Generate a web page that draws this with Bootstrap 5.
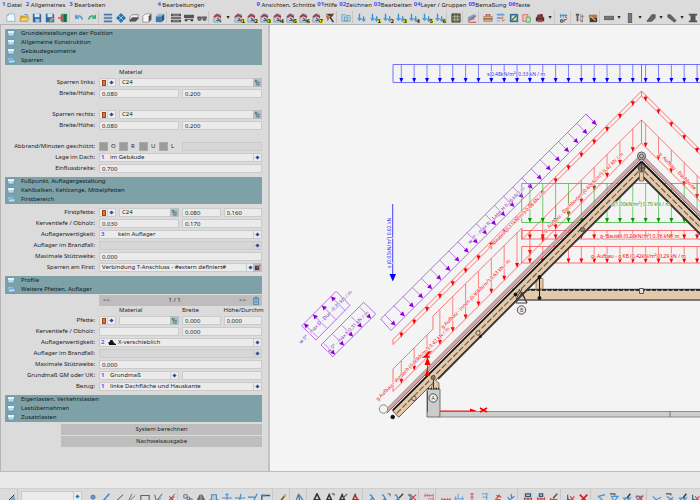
<!DOCTYPE html>
<html lang="de">
<head>
<meta charset="utf-8">
<meta name="viewport" content="width=device-width, initial-scale=1">
<title>Dachtragwerk</title>
<link href="https://cdn.jsdelivr.net/npm/bootstrap@5.3.0/dist/css/bootstrap.min.css" rel="stylesheet">
<style>
:root { --panel:#dbdbdb; --field:#ebebeb; --edge:#cbcbcb; --teal:#7da1a7; }
body { font:6px/9px "Noto Sans","DejaVu Sans",sans-serif; color:#222; background:var(--panel); }
button, input, select { font:inherit; color:inherit; }
.menu { height:11px; padding-left:2px; }
.menu a { color:#222; text-decoration:none; line-height:10px; white-space:nowrap; margin-right:2px; }
.menu .wide { margin-right:4px; }
.menu .group { margin-left:50px; }
.menu b { color:#4a4aff; position:relative; top:-1px; }
.tools { height:14px; padding-left:4px; border-bottom:1px solid #b4b4b4; }
.tool { flex:0 0 13px; height:13px; padding:0; border:0; background:none; position:relative; display:flex; align-items:center; justify-content:center; }
.tool svg { width:10px; height:10px; }
.tool i { position:absolute; right:0; bottom:0; font:bold 5px/5px "DejaVu Sans",sans-serif; background:#f2ee1c; color:#222; }
.drop { flex:0 0 8px; text-align:center; padding:0; border:0; background:none; line-height:9px; }
.rule { flex:0 0 3px; height:12px; border-left:1px solid #c6c6c6; }
.side { flex:0 0 270px; padding:4px 6px 0 4px; border-left:1px solid #b4b4b4; border-right:2px solid #c2c2c2; background:var(--panel); }
.side section { padding:3px 0; }
.side section.paged { padding-top:1px; }
.heads { background:var(--teal); }
.heads button { display:flex; align-items:center; width:100%; height:9px; border:0; padding:0 0 0 2px; background:none; text-align:left; gap:5px; color:#132024; }
.heads svg { width:9px; height:7px; }
.frow { display:grid; grid-template-columns:90px minmax(0,1fr); column-gap:4px; height:11px; align-items:center; }
.frow > label, .frow > .lab { text-align:right; white-space:nowrap; }
.parts { display:grid; column-gap:3px; align-items:center; min-width:0; }
.two { grid-template-columns:1fr 1fr; }
.mat { grid-template-columns:17px minmax(0,1fr); }
.mat4 { grid-template-columns:17px minmax(0,61fr) minmax(0,39fr) minmax(0,39fr); }
.box { height:9px; border:1px solid var(--edge); background:var(--field); min-width:0; width:100%; padding:0 2px; line-height:7px; border-radius:0; }
.off { background:#d7d7d7; }
.pick { display:flex; align-items:center; padding:0; }
.pick select, .pick input { appearance:none; border:0; background:none; flex:1 1 0; min-width:0; height:7px; line-height:7px; padding:0 2px; outline:0; }
.pick b { flex:0 0 8px; color:#5a5aff; line-height:7px; padding-left:1px; }
.dia { flex:0 0 8px; border-left:1px solid var(--edge); height:7px; display:flex; align-items:center; justify-content:center; }
.dia::before { content:""; width:3px; height:3px; background:#2f4c9c; transform:rotate(45deg); }
.sw { flex:0 0 7px; display:flex; justify-content:center; }
.sw::before { content:""; width:4px; height:6px; background:#ee7030; border:1px solid #9a451b; }
.tree { flex:0 0 9px; height:9px; margin:-1px; padding:0; border:0; background:#b9bfc0; display:flex; align-items:center; justify-content:center; }
.tree svg { width:7px; height:7px; }
.checks label { display:flex; align-items:center; width:20px; }
.checks input { appearance:none; width:9px; height:9px; background:#9b9b9b; border:1px solid #aaa; margin:0 3px 0 0; }
.pager { height:11px; margin-left:94px; background:#bdbdbd; display:grid; grid-template-columns:15px 1fr 15px 12px; text-align:center; align-items:center; }
.pager button { border:0; background:none; padding:0; line-height:9px; }
.pager svg { width:8px; height:9px; display:block; margin:auto; }
.caps { height:9px; }
.void { height:10px; }
.actions { display:grid; row-gap:1px; padding:2px 0 0 56px; }
.act { height:11px; border:0; padding:0; background:#bebebe; line-height:11px; }
.plan { background:#f4f4f4; min-width:0; }
.plan svg { width:100%; height:100%; display:block; }
.plan text { font-family:"Noto Sans","Liberation Sans",sans-serif; font-size:5px; paint-order:stroke; stroke:#f4f4f4; stroke-width:1px; }
.message { height:18px; background:#e9e9e9; border-top:1px solid #bbb; border-bottom:1px solid #cfcfcf; }
.foot { height:11px; padding-left:4px; }
.foot .tool { height:18px; }
.foot .rule { flex-basis:4px; }
.layerpick { flex:0 0 61px; height:15px; margin:2px 4px 0 0; }
.layerpick .dia { height:9px; align-self:flex-start; }
.layerpick .dia::before { background:#1c7cc4; }
</style>
<script src="https://cdn.jsdelivr.net/npm/bootstrap@5.3.0/dist/js/bootstrap.bundle.min.js"></script>
</head>
<body class="vh-100 d-flex flex-column overflow-hidden">
<svg class="d-none">
  <symbol id="shut" viewBox="0 0 9 7"><path d="M1 1h6v5H1z" fill="#b5d9ee" stroke="#5292bd" stroke-width=".7"/><path d="M1 1h6v2H1z" fill="#e5f4fc"/></symbol>
  <symbol id="open" viewBox="0 0 9 7"><path d="M1 1h5v1h1v4H1z" fill="#8cc0e0"/><path d="M1 6l1-3h7L7 6z" fill="#b8dcf0" stroke="#4a8bb8" stroke-width=".6"/></symbol>
  <symbol id="tree" viewBox="0 0 8 8"><path d="M1 1h3v2H1zM4 3h3v2H4zM4 6h3v1H4z" fill="#5f8f99"/><path d="M2 1v3h3M3 4v3h3" fill="none" stroke="#55757c" stroke-width=".8"/></symbol>
  <symbol id="bin" viewBox="0 0 8 9"><path d="M1.500 2.500h5v6h-5z" fill="#9fc9df" stroke="#4a82a5" stroke-width=".8"/><path d="M1 2h6M3 1h2M3.200 3.500v4M4.800 3.500v4" stroke="#4a82a5" stroke-width=".8"/></symbol>
</svg>

<nav class="menu d-flex flex-shrink-0" aria-label="Hauptmenü">
  <a href="#" class="wide"><b>1</b> Datei</a>
  <a href="#" class="wide"><b>2</b> Allgemeines</a>
  <a href="#"><b>3</b> Bearbeiten</a>
  <a href="#" class="group"><b>4</b> Bearbeitungen</a>
  <a href="#" class="group"><b>9</b> Ansichten, Schnitte</a>
  <a href="#"><b>01</b>Hilfe</a>
  <a href="#"><b>02</b>Zeichnen</a>
  <a href="#"><b>03</b>Bearbeiten</a>
  <a href="#"><b>04</b>Layer / Gruppen</a>
  <a href="#"><b>05</b>Bemaßung</a>
  <a href="#"><b>06</b>Texte</a>
</nav>
<div class="tools d-flex flex-shrink-0 overflow-hidden" id="topTools" role="toolbar" aria-label="Werkzeuge"></div>

<main class="d-flex flex-grow-1 overflow-hidden">
  <form class="side">
    <div class="heads">
      <button type="button"><svg><use href="#shut"/></svg>Grundeinstellungen der Position</button>
      <button type="button"><svg><use href="#shut"/></svg>Allgemeine Konstruktion</button>
      <button type="button"><svg><use href="#shut"/></svg>Gebäudegeometrie</button>
      <button type="button"><svg><use href="#open"/></svg>Sparren</button>
    </div>
    <section>
      <div class="frow caps"><span></span><span class="parts mat"><span></span><span>Material</span></span></div>
      <div class="frow"><label for="sl">Sparren links:</label><div class="parts mat"><button type="button" class="box pick" aria-label="Art"><span class="sw"></span><span class="dia"></span></button><div class="box pick"><input id="sl" value="C24"><button type="button" class="tree" aria-label="Auswahl"><svg><use href="#tree"/></svg></button></div></div></div>
      <div class="frow"><label for="bl">Breite/Höhe:</label><div class="parts two"><input class="box" id="bl" value="0.080"><input class="box" value="0.200" aria-label="Höhe links"></div></div>
      <div class="void"></div>
      <div class="frow"><label for="sr">Sparren rechts:</label><div class="parts mat"><button type="button" class="box pick" aria-label="Art"><span class="sw"></span><span class="dia"></span></button><div class="box pick"><input id="sr" value="C24"><button type="button" class="tree" aria-label="Auswahl"><svg><use href="#tree"/></svg></button></div></div></div>
      <div class="frow"><label for="br">Breite/Höhe:</label><div class="parts two"><input class="box" id="br" value="0.080"><input class="box" value="0.200" aria-label="Höhe rechts"></div></div>
      <div class="void"></div>
      <div class="frow"><span class="lab">Abbrand/Minuten geschützt:</span><div class="parts two"><div class="checks d-flex"><label><input type="checkbox">O</label><label><input type="checkbox">R</label><label><input type="checkbox">U</label><label><input type="checkbox">L</label></div><input class="box off" disabled aria-label="Minuten"></div></div>
      <div class="frow"><label for="lage">Lage im Dach:</label><div class="box pick"><b>1</b><select id="lage"><option>im Gebäude</option></select><span class="dia"></span></div></div>
      <div class="frow"><label for="ein">Einflussbreite:</label><input class="box" id="ein" value="0.700"></div>
    </section>
    <div class="heads">
      <button type="button"><svg><use href="#shut"/></svg>Fußpunkt, Auflagergestaltung</button>
      <button type="button"><svg><use href="#shut"/></svg>Kehlbalken, Kehlzange, Mittelpfetten</button>
      <button type="button"><svg><use href="#open"/></svg>Firstbereich</button>
    </div>
    <section>
      <div class="frow"><label for="fp">Firstpfette:</label><div class="parts mat4"><button type="button" class="box pick" aria-label="Art"><span class="sw"></span><span class="dia"></span></button><div class="box pick"><input id="fp" value="C24"><button type="button" class="tree" aria-label="Auswahl"><svg><use href="#tree"/></svg></button></div><input class="box" value="0.080" aria-label="Breite"><input class="box" value="0.160" aria-label="Höhe"></div></div>
      <div class="frow"><label for="kv">Kerventiefe / Obholz:</label><div class="parts two"><input class="box" id="kv" value="0.030"><input class="box" value="0.170" aria-label="Obholz"></div></div>
      <div class="frow"><label for="aw">Auflagerwertigkeit:</label><div class="box pick"><b>3</b><span class="ps-2"></span><select id="aw"><option>kein Auflager</option></select><span class="dia"></span></div></div>
      <div class="frow"><label for="ab">Auflager im Brandfall:</label><div class="box pick off"><select id="ab"><option></option></select><span class="dia"></span></div></div>
      <div class="frow"><label for="ms">Maximale Stützweite:</label><input class="box" id="ms" value="0.000"></div>
      <div class="frow"><label for="sf">Sparren am First:</label><div class="box pick"><select id="sf"><option>Verbindung T-Anschluss - #extern definiert#</option></select><span class="dia"></span><button type="button" class="tree" aria-label="Bearbeiten"><svg viewBox="0 0 8 8"><path d="M1 2h5v5H1z" fill="#444"/><path d="M3 5l4-4" stroke="#d43" stroke-width="1.300"/></svg></button></div></div>
    </section>
    <div class="heads">
      <button type="button"><svg><use href="#shut"/></svg>Profile</button>
      <button type="button"><svg><use href="#open"/></svg>Weitere Pfetten, Auflager</button>
    </div>
    <section class="paged">
      <div class="pager"><button type="button">&lt;&lt;</button><span>1 / 1</span><button type="button">&gt;&gt;</button><button type="button" aria-label="Löschen"><svg><use href="#bin"/></svg></button></div>
      <div class="frow caps"><span></span><span class="parts mat4 text-nowrap"><span></span><span>Material</span><span>Breite</span><span>Höhe/Durchm</span></span></div>
      <div class="frow"><label for="pf">Pfette:</label><div class="parts mat4"><button type="button" class="box pick" aria-label="Art"><span class="sw"></span><span class="dia"></span></button><div class="box pick"><input id="pf"><button type="button" class="tree" aria-label="Auswahl"><svg><use href="#tree"/></svg></button></div><input class="box" value="0.000" aria-label="Breite"><input class="box" value="0.000" aria-label="Höhe"></div></div>
      <div class="frow"><label for="kv2">Kerventiefe / Obholz:</label><div class="parts two"><input class="box" id="kv2"><input class="box" value="0.000" aria-label="Obholz"></div></div>
      <div class="frow"><label for="aw2">Auflagerwertigkeit:</label><div class="box pick"><b>2</b><svg width="8" height="6" viewBox="0 0 8 6"><path d="M1 4a1 1 0 0 1 1-2a1.500 1.500 0 0 1 3-1l1 2 2 1v1H1z" fill="#111"/></svg><select id="aw2"><option>X-verschieblich</option></select><span class="dia"></span></div></div>
      <div class="frow"><label for="ab2">Auflager im Brandfall:</label><div class="box pick off"><select id="ab2"><option></option></select><span class="dia"></span></div></div>
      <div class="frow"><label for="ms2">Maximale Stützweite:</label><input class="box" id="ms2" value="0.000"></div>
      <div class="frow"><label for="gm">Grundmaß GM oder UK:</label><div class="parts two"><div class="box pick"><b>1</b><select id="gm"><option>Grundmaß</option></select><span class="dia"></span></div><input class="box" aria-label="Maß"></div></div>
      <div class="frow"><label for="bz">Bezug:</label><div class="box pick"><b>1</b><select id="bz"><option>linke Dachfläche und Hauskante</option></select><span class="dia"></span></div></div>
    </section>
    <div class="heads">
      <button type="button"><svg><use href="#shut"/></svg>Eigenlasten, Verkehrslasten</button>
      <button type="button"><svg><use href="#shut"/></svg>Lastübernahmen</button>
      <button type="button"><svg><use href="#shut"/></svg>Zusatzlasten</button>
    </div>
    <div class="actions"><button type="button" class="act">System berechnen</button><button type="button" class="act">Nachweisausgabe</button></div>
  </form>
  <div class="plan flex-grow-1"><svg id="plan" viewBox="270 25 430 446" preserveAspectRatio="xMinYMin slice" role="img" aria-label="Dachquerschnitt mit Lasten"></svg></div>
</main>
<div class="message flex-shrink-0"></div>
<div class="foot d-flex flex-shrink-0 overflow-hidden" id="footTools" role="toolbar" aria-label="Zeichenwerkzeuge"></div>

<script>
const line = (d, c = '#444', w = 1, dash = '') => `<path d="${d}" fill="none" stroke="${c}" stroke-width="${w}"${dash ? ` stroke-dasharray="${dash}"` : ''}/>`;
const area = (d, c, s = 'none') => `<path d="${d}" fill="${c}" stroke="${s}" stroke-width=".8"/>`;
const B = '#3f8acb', R = '#d8484a', K = '#444';
const icons = {
  neu: area('M1 3l2-2h7l1 9H1z', '#eef8ff', '#78a9cc') + line('M3 1v2H1', '#78a9cc', .8),
  auf: area('M1 3h4l1 1h4v6H1z', '#dca43a') + area('M1 10l2-5h9l-2 5z', '#f5cf62', '#b98526') + line('M6 2h4v2', '#4a86b8'),
  sp: area('M1 1h9l1 1v9H1z', '#2b6ba5') + area('M3 1h6v4H3z', '#d3e7f5') + area('M4 7h5v4H4z', '#9ec4e0'),
  sp2: area('M1 1h9l1 1v9H1z', '#2b6ba5') + area('M3 1h6v4H3z', '#d3e7f5') + area('M5 6h6v5H5z', '#777') + line('M6 10l4-4', '#eee'),
  aus: area('M4 1h7v10H4z', '#2f9a72') + area('M7 2l3-1v10l-3-1z', '#176b4c') + line('M0 6h6M3 3l3 3-3 3', R, 1.6),
  un: line('M2 6c2-4 7-3 8 2M2 2v4h4', '#4b9cd0', 1.6),
  re: line('M10 6C8 2 3 3 2 8M10 2v4H6', '#35a878', 1.6),
  li: area('M1 1h10v2H1zM1 5h10v2H1zM1 9h10v2H1z', '#4b7298') + line('M1 4h10M1 8h10', '#a9cbe6'),
  wd: area('M6 0l6 6-6 6-6-6z', '#2e73b3') + line('M3 3l6 6M9 3L3 9', '#9bd0f0'),
  w1: area('M1 5l3-3h7v5l-3 3H1z', '#f4f4f4', '#666') + area('M1 8l3-3h7v2l-3 3H1z', '#555'),
  w2: area('M1 4l3-3h7v7l-3 3H1z', '#f4f4f4', '#777') + area('M8 4l3-3v7l-3 3z', '#555'),
  w3: area('M1 4h7v7H1z', '#3b7ab3') + area('M1 4l3-3h7L8 4z', '#8db9da') + area('M8 4l3-3v7l-3 3z', '#22578c'),
  g1: area('M0 1h12v3H0zM0 5h12v2H0zM0 8h12v3H0z', '#4f4f4f') + line('M2 2.500h8M2 9.500h8', '#aaa'),
  g2: area('M0 2h12v4H0zM1 7h10v1H1z', '#555') + area('M1 8h3v2H1zM8 8h3v2H8z', '#333'),
  g3: line('M0 5h12', '#555', 1.4) + `<circle cx="3" cy="7" r="2" fill="#777" stroke="#444"/><circle cx="9" cy="7" r="2" fill="#777" stroke="#444"/>`,
  doc: area('M1 4l3-3 5 1v9H1z', '#c5cfd8', '#7b8a98') + area('M1 4l4-3 5 3-1 2-4-2-3 2z', '#a83a42') + line('M5 6l5 5M4 9h4', '#3c5f80', 1.3),
  br: area('M1 1h10L8 5 5 4z', '#5d4030') + area('M1 2l5 3-3 5z', '#c5652f') + line('M6 5l4 6', '#333', 1.8),
  fo: area('M1 2h4l1 1h5v7H1z', '#b9d6e8', '#5d95b7') + line('M4 5h4v4H4z', '#5d95b7'),
  dn: line('M3 1v8M8 4v6', B, 1.6) + area('M0 6h6L3 10zM5 7h6l-3 4z', '#509fd6'),
  gr: area('M1 1h10v10H1z', '#55694f') + line('M1 4.500h10M1 8h10M4.500 1v10M8 1v10', '#b6bea8', .9) + line('M1 1h10v10H1z', '#653d33'),
  ma: area('M1 5l8-4v7H1z', '#6aa8d2') + line('M1 10l10-7M2 11h9', '#cf4545', 1.3),
  kx: area('M1 4h10v6H1z', '#d3bd96', '#87754e') + line('M4 4V2h4v2M1 7h10', '#c23a31', 1.3),
  t1: area('M1 1h9v2H1zM1 5h6v2H1zM1 9h4v1H1z', '#579ed3') + line('M8 4v6l3-2', '#d65'),
  bl: area('M1 1h10v10H1z', '#366f95') + area('M3 3h6v6H3z', '#d8e4a8') + line('M3 9l6-6', '#2d6e9c', 1.5),
  cp: area('M1 2h6v8H1z', '#f7c2bb', '#d5473f') + area('M5 5h5v6H5z', '#b6e0bb', '#3a9a55'),
  dr: area('M1 5h10v5H1z', '#3d3d3d') + area('M3 2l6-1 1 4H2z', '#8d3030') + area('M3 8h6v3H3z', '#c24040'),
  dx: line('M2 1v5M5 1v5M8 1v5M1 3h9', '#4a97ce', 1.2) + line('M2 8h2v3H2zM6 11V8h3', '#333', 1) + line('M8 4l2 3', R),
  tx: area('M1 1h4v2H1zM2 3h2v7H2z', '#555') + line('M7 1v6M9 2v9M6 4h5', '#888') + line('M6 8l3 3', R, 1.4),
  pa: area('M1 2h10v4H1z', '#bd7436') + area('M2 6h9v5H2z', '#3c3c3c') + line('M3 4l6 5', '#e3b96c', 1.4),
  b1: area('M0 4h12v4H0z', '#777', '#444'), b2: area('M4 0h4v12H4z', '#777', '#444'),
  b3: area('M1 10l6-8h4v4L7 10z', '#666', '#444'), b4: area('M1 2h3l7 7-2 2L1 5z', '#666', '#444'),
  b5: area('M1 1h10v2H9v6h2v2H1V9h2V3H1z', '#555'),
  pt: `<circle cx="6" cy="5" r="2.500" fill="#6c99c4" stroke="#4476a8"/>`,
  ed: line('M1 11L10 2', '#333', 1.2) + area('M6 7l4-4 2 8H6z', '#7ba6cb'),
  l1: line('M2 10L10 1', B, 1.8) + line('M1 12l4-4', K), l2: line('M1 11L11 2', K, 1.1),
  l3: line('M1 11L6 1M1 11l9-8M1 11h10', '#555', .9), l4: line('M1 3h10v7H1z', '#4b6884', 1.4),
  l5: line('M2 2l2 8 7-9', K) + line('M4 10l6-4', B), l6: line('M1 11L11 1', '#555') + line('M4 4l7 7M10 4l-7 7', R, 1.5),
  m1: line('M1 2h4v4H1zM5 5h3v3H5zM8 7h3v4H8z', '#55738f', 1.1), m2: area('M5 2v9H0zM7 2v9h5z', '#777', '#444'),
  m3: area('M3 2h6v6h2v4H1V8h2z', '#a9cae2', '#2d6398'), m4: line('M6 0v12M0 6h12M4 2h4M4 10h4', B, 1.1),
  m5: line('M0 6h12M7 1L5 12', B, 1.4), m6: line('M0 5h8M11 1l-5 10', B, 1.4), m7: line('M1 12V3h10', '#4c545c', 1.6) + line('M1 3h4', B, 2),
  pe: line('M2 11l7-9', '#7a5035', 2) + line('M7 3l3 1', '#d6c24a', 2) + line('M1 11h9', '#3a9', 1),
  ta: line('M4 2L1 10h5z', '#567', 1.3) + line('M5 2l6 9', B, 1.6),
  a1: line('M1 11L6 1l5 10M3 8h6', '#333', 1.9), a2: line('M1 11L5 2l4 9M3 8h5', '#333', 1.8) + line('M8 1h3v2', '#333'),
  a3: line('M1 11L5 2l4 9M3 8h5', '#333', 1.8) + line('M6 6l5-5', '#567', 1.5), a4: line('M1 11L5 2l4 9M3 8h5', '#933', 1.8) + line('M5 4l6 6', R, 1.5),
  c1: line('M2 2l2 1 6 9M5 6l-4 5', B, 1.6), c2: line('M1 2l2 1 5 9M5 6l-4 5', B, 1.6) + line('M8 1h3v3', '#555'),
  c3: line('M1 2l2 1 5 9M5 6l-4 5', B, 1.6) + line('M6 6l5-5', '#444', 1.8), c4: line('M1 2l2 1 5 9M5 6l-4 5', B, 1.6) + line('M3 1l8 8M11 2L3 9', '#b44', 1.4),
  d1: line('M1 3h10M1 1v4M4 1v4M7 1v4M11 1v10M5 7h6', '#d66', 1), d2: line('M1 8h10M1 6v5M4 6v5M8 6v5M11 6v5', '#d55', 1.2),
  d3: line('M0 7h12M2 4v8M10 4v8M5 1v6', '#5a9bd2', 1.1), d4: line('M6 0v12M4 1h4M4 5h4M4 9h4', '#d55', 1.2), d5: line('M2 1h8M8 1v11M3 5h6M2 9h6', '#5a9bd2', 1.1),
  d6: line('M1 11L8 2M4 3l6 2M3 7l6 1', R, 1.5), d7: line('M1 11L10 4M6 1l1 6M2 5l5 6', B, 1.5),
  e1: line('M3 1h6v3H3z', '#357', 1.5) + line('M1 7h10M2 5v6M6 5v6M10 5v6', '#a55', 1.4),
  e2: line('M4 1h4v3H4z', '#357', 1.5) + line('M1 7h10M2 5v6M6 5v6M10 5v6', '#d44', 1.4),
  e3: line('M1 8h9M2 6v5M6 6v5', '#d44', 1.4) + line('M5 6l5-5', '#555', 1.8),
  x1: line('M2 2v10M2 7l8 4', '#367', 1.4) + line('M5 4l5 6M10 4l-5 6', R, 1.5), x2: line('M1 2l9 9M10 2l-9 9', '#c22', 2),
  f1: line('M11 2L3 4l6 6M3 4l5-1', '#4b92cc', 1.5), f2: line('M3 4h8L6 10z', '#4b92cc', 1.4) + line('M1 1h6v2', '#456', 1.3),
  f3: line('M2 6h8L5 10z', '#4b92cc', 1.5) + line('M6 6l4-5', '#345', 1.8), f4: line('M1 4h8L5 11z', '#4b92cc', 1.4) + line('M3 3l7 7M10 3L3 9', R, 1.4),
  h1: line('M1 4l4 4 6-3M5 8l-3 3', '#4b92cc', 1.4), h2: line('M2 4l8 5M10 5l-8 5', '#4b92cc', 1.3) + line('M1 1h6v2', '#456', 1.3)
};
const tool = n => {
  if (n === '|') return '<span class="rule"></span>';
  if (n === '.') return '<button type="button" class="drop" aria-label="Mehr">▾</button>';
  const [key, num] = n.split(':');
  return `<button type="button" class="tool" aria-label="${key}"><svg viewBox="0 0 12 12">${icons[key]}</svg>${num ? `<i>${num}</i>` : ''}</button>`;
};
const bar = s => s.split(' ').map(tool).join('');
document.getElementById('topTools').innerHTML = bar('neu auf sp sp2 aus | un re | li wd w1 w2 w3 | g1 g2 g3 | doc . doc:1 doc:2 doc:3 doc:4 doc:5 doc:6 doc:7 br | fo | dn dn:1 dn:2 dn:3 dn:4 dn:5 dn:6 | gr | ma | kx t1 bl cp dr . | dx | tx pa | b1 . b2 . b3 . b4 . b5');
document.getElementById('footTools').innerHTML = bar('ed |') +
  '<div class="box pick layerpick"><input aria-label="Layer"><span class="dia"></span></div>' +
  bar('pt l1 l2 l3 l4 l5 l6 | m1 m2 m3 m4 m5 m6 m7 | pe | ta | a1 a2 a3 a4 | c1 c2 c3 c4 | d1 | d2 d3 d4 d5 d6 d7 | e1 e2 e3 | x1 x2 | f1 f2 f3 f4 | h1 h2 f3 x1 | d3');

// Roof section: slopes run at 45 degrees on both sides of the ridge axis.
const X0 = 641.5, RED = '#ff5050', HEAD = '#ff0000';
let g = '';
const down = (x, y1, y2, c, h) => { g += line(`M${x} ${y1}V${y2}`, c, .7) + area(`M${x - 2} ${y2 - 4.5}h4l-2 4.500z`, h); };
const steps = (from, to) => Array.from({ length: 30 }, (_, i) => 401.3 + i * 12.86).filter(x => x > from && x < to);
const labels = [];
const say = (x, y, t, c, r = 0) => labels.push(`<text x="${x}" y="${y}" fill="${c}" transform="rotate(${r} ${x} ${y})">${t}</text>`);
const roof = top => `M393 ${top + 248.5}L${X0} ${top}L760 ${top + 118.5}`;

g += line('M393 64.500H760M393 82.500H760M393 64.500V82.500M641.500 64.500V82.500', '#5050ff', .8);
steps(393, 720).forEach(x => down(x, 64.5, 82.5, '#5050ff', '#0000ff'));
say(487, 76, 's(0.48kN/m²) 0.33 kN / m', '#3030ff');
g += line('M392.700 204V276', '#4040ff') + area('M389.500 274h6.500l-3.200 7.500z', '#0000ff');
say(391, 268, 's (0.03kN/m²) 0.02 kN', '#3030ff', -90);

// upper dead load strip
g += line(roof(91), RED, .8) + line(roof(96), RED, .8) + line('M393 339.500v5M641.500 91v5', RED, .8);
steps(393, 720).forEach(x => { const d = Math.abs(x - X0); down(x, 91 + d, 97 + d, RED, HEAD); });
// lower strip, stepped at the wall and at the collar beam
g += line(roof(143), RED, .8) + line('M393 391.500V369L433 329V316L522 228V239.500L641.500 120L760 238.500M641.500 120v23', RED, .8);
steps(393, 720).forEach(x => { const d = Math.abs(x - X0), t = x < 433 ? 762 - x : x < 522 ? 749.5 - x : 120 + d; down(x, t, 143 + d, RED, HEAD); });

// wind loads
const V = '#a848f4', VH = '#9000d8';
g += line('M380.700 319L586 114L597 125L391 330.500z', V, .8);
for (let i = 0; i < 23; i++) { const x = 395.5 + i * 9.13, y = 325.5 - i * 9.13; g += line(`M${x} ${y}l-10.700 -10.700`, V, .7) + area(`M${x} ${y}l-5 -1.500l3.500 -3.500z`, VH); }
g += line('M301.700 326L336 291.300L350 305.300L316 340zM321 345L363.700 302.300L375.700 314L332.700 356.700z', V, .8);
for (let i = 0; i < 4; i++) { const x = 304 + i * 9, y = 323.5 - i * 9; g += line(`M${x} ${y}l14 14`, V, .7) + area(`M${x} ${y}l5 1.500l-3.500 3.500z`, VH); }
for (let i = 0; i < 5; i++) { const x = 335 + i * 9, y = 354.5 - i * 9; g += line(`M${x} ${y}l-11 -11`, V, .7) + area(`M${x} ${y}l-5 -1.500l3.500 -3.500z`, VH); }
say(301, 344, 'w 0° - max D - Due -0.35 kN / m', '#8030c0', -45);
say(329, 353, 'w 0° - max F 0.31 kN / m', '#8030c0', -45);
say(470, 244, 'w 0° - max N - Lage H 0.26 kN / m', '#8030c0', -45);

// live load and collar beam loads
g += line('M521.700 183.500H760M521.700 222.500H760M521.700 183.500V222.500', '#40b840', .8);
steps(522, 720).forEach(x => down(x, 183.5, 222.5, '#40b840', '#009a00'));
g += line('M521.700 230.500H760M521.700 239H760M521.700 230.500V239M521.700 246.500H760M521.700 263H760M521.700 246.500V263', RED, .8);
steps(522, 720).forEach(x => { down(x, 230.5, 239, RED, HEAD); down(x, 246.5, 263, RED, HEAD); });
say(490, 249, 'g- Bauteil (0.11kN/m²) 0.08 kN / m', HEAD, -45);
say(545, 233, 'g- Aufbau - Dachboden (0.60kN/m²) 0.42 kN / m', HEAD, -45);
say(658, 154, 'g- Aufbau - Dachbode', HEAD, 45);
say(378, 401, 'g Aufbau - Vordach (0.60kN/m²) 0.42 kN / m', HEAD, -45);
say(443, 329, 'g Aufbau - innen (0.90kN/m²) 0.63 kN / m', HEAD, -45);
say(611, 206, 'p(1.00kN/m²) 0.70 kN / m', '#109a10');
say(600, 238, 'g- Bauteil (0.23kN/m²) 0.16 kN / m', HEAD);
say(591, 258, 'g- Aufbau - g KB (0.42kN/m²) 0.29 kN / m', HEAD);

// collar beam
const W = '#e3c8aa', D = '#3a3a3a';
g += area('M512 290.500H760V299.500H512z', W) + line('M512 289.500H760M512 300H760', '#555', 1.4) + line('M520 290H760', '#111', 1.6, '4 1.5');
g += area('M639.500 288.500h4v5h-4z', '#ddd', D) + area('M536 278.500h7V289h-7z', W, '#8a6f50') + line('M539.500 277V299', '#111');
// rafters
const rafter = left => {
  const p = (x, sum) => `${left ? x : 2 * X0 - x} ${sum - x}`;
  const seg = (from, sum, c, w, dash) => line(`M${p(from, sum)}L${p(X0, sum)}`, c, w, dash);
  const a = left ? 392.7 : 540, eave = left ? 6 : 0;
  g += area(`M${p(a, 803.5)}L${p(X0, 803.5)}L${p(X0, 816)}L${p(a + eave, 816)}z`, W, D);
  g += seg(a - eave, 798, '#d9a3a3', 2.4) + seg(a - eave, 795.5, '#555', .8) + seg(a - eave, 800, '#555', .8);
  g += seg(a, 803, '#151515', 1.8) + seg(a + 4, 810, '#6b5d50', 1.2, '6 2') + seg(left ? 438 : a, 817, D, 1.8);
};
rafter(true); rafter(false);
const ring = (x, y, r, f = 'none', c = '#555') => { g += `<circle cx="${x}" cy="${y}" r="${r}" fill="${f}" stroke="${c}"/>`; };
g += area('M639.500 172h4v9h-4z', W, '#7a6148');
ring(641.5, 156, 4, '#bbbbbb88'); ring(641.5, 156, 2); ring(641.5, 168, 3.5, '#9a8570'); g += line('M638 168h7M641.500 164v8', D, .8);
ring(582.5, 229.5, 2.2, '#8b7865'); ring(478, 333, 2.2, W); ring(414, 398.5, 2.2, W);
ring(539.5, 277, 1.5, '#111', '#111'); ring(539.5, 298, 1.5, '#111', '#111'); ring(515.5, 294.5, 1.5, '#111', '#111'); ring(480.5, 336.5, 1, '#111', '#111');
g += line('M522 289l-6 10M519 289l8 14M516 303h11l-5-11z', D, 1);
// wall, slab and axes
g += area('M427 389h13v28h-13z', '#cccccc', '#555') + area('M440 411.500H760V417H440z', '#cfcfcf', '#777') + line('M670 411v6', '#777');
g += line('M427.500 391V412M440 411H475M427.500 375V358', HEAD, .9) + area('M424.500 365l3-8 3 8zM425 376l2-7 3 7zM470 408.500l7 2.500h-7z', HEAD) + line('M424 352h6l-6 5h6M480 408l7 4M487 408l-7 4', HEAD, 1.6);
g += area('M431 389l3-10 5 4v6z', W, '#7a6148') + line('M428 388.500h11', '#222', 1.6, '1.5 1') + line('M433.500 377v12', D);
ring(433.2, 377.5, 2, '#8b7865'); ring(433.2, 398, 4.2, '#e4e4e4'); ring(521.5, 310, 4.2, '#e4e4e4');
ring(383.5, 409, 4.2, '#f4f4f4', '#888'); ring(392.7, 417, 1.8, '#111', '#111');
say(431.5, 400, 'A', '#333'); say(520, 312, 'B', '#333');
document.getElementById('plan').innerHTML = g + labels.join('');
</script>
</body>
</html>
